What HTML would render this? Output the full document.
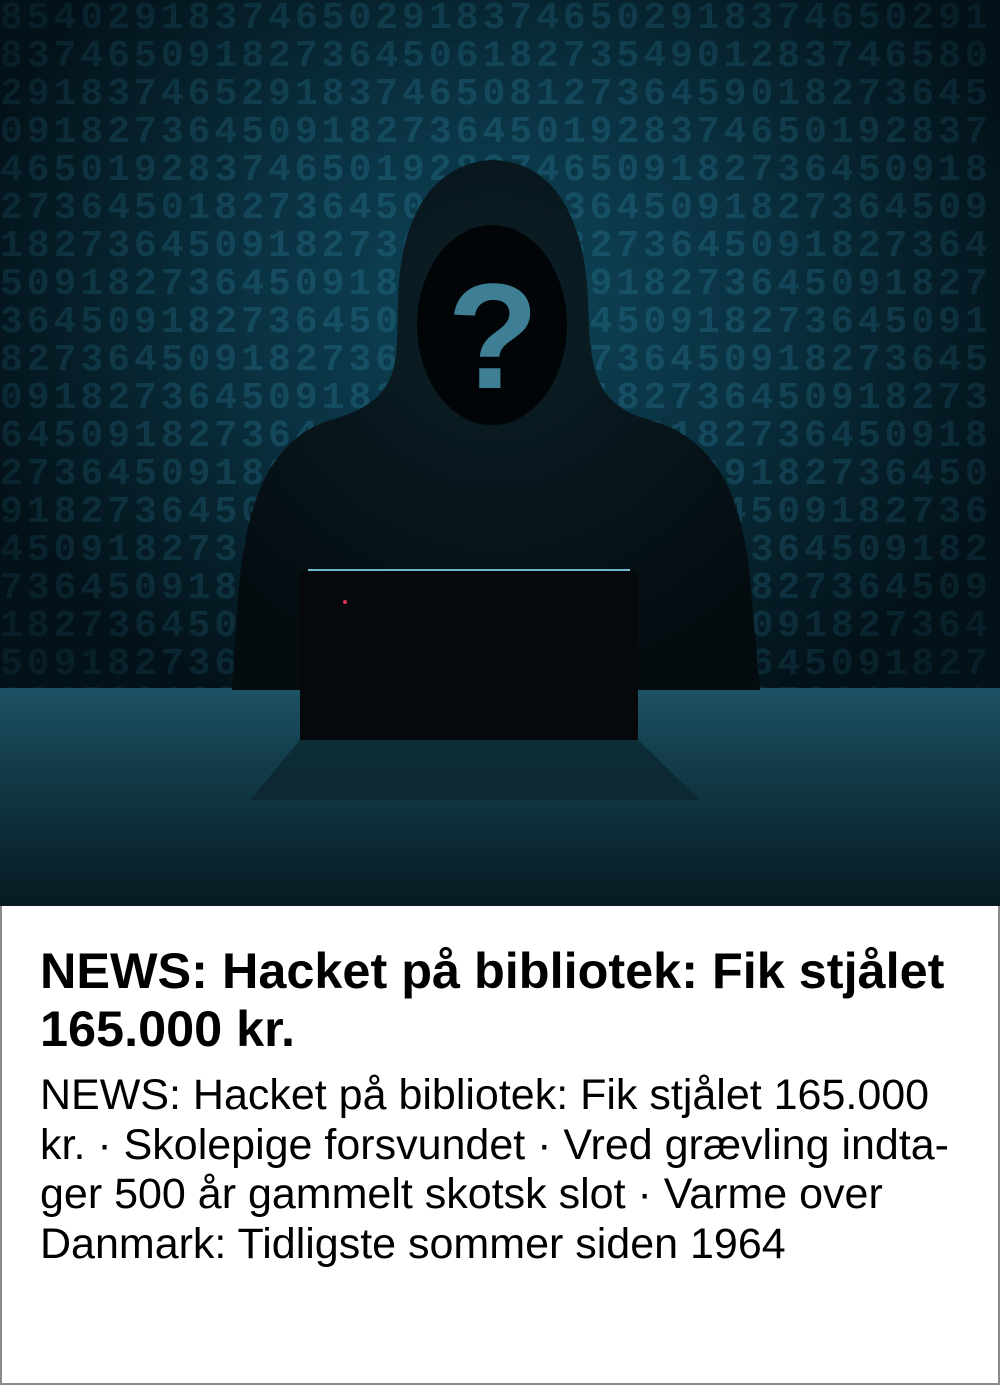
<!DOCTYPE html>
<html><head><meta charset="utf-8"><style>
*{margin:0;padding:0;box-sizing:border-box}
body{width:1000px;height:1385px;background:#fff;overflow:hidden;position:relative;font-family:"Liberation Sans",Arial,sans-serif}
.photo{position:absolute;left:0;top:0;width:1000px;height:906px;overflow:hidden;
background:radial-gradient(ellipse 560px 460px at 500px 300px,#0e4558 0%,#0a3242 45%,#061f29 75%,#031118 100%)}
.digits{position:absolute;left:0;top:0;width:1000px;height:690px;overflow:hidden;color:#2d7f9a;opacity:.32;font:bold 38px "Liberation Mono",monospace;line-height:38px;letter-spacing:4px;word-break:break-all;white-space:normal;
-webkit-mask-image:radial-gradient(ellipse 600px 500px at 500px 330px,#000 40%,rgba(0,0,0,.4) 100%)}
.desk{position:absolute;left:0;top:688px;width:1000px;height:218px;background:linear-gradient(#1d5365 0%,#143f4e 30%,#0c2a35 70%,#071a22 100%)}
.card{position:absolute;left:0;top:906px;width:1000px;height:479px;border:2px solid #8a8a8a;border-top:none}
h1{position:absolute;left:40px;top:942px;font-size:50.4px;font-weight:bold;line-height:58px;color:#000;white-space:nowrap}
p{position:absolute;left:40px;top:1071px;font-size:43px;line-height:49.5px;color:#000;white-space:nowrap}
</style></head><body>
<div class="photo">
<div class="digits">854029183746502918374650291837465029183746509182736450618273549012837465802918374652918374650812736459018273645091827364509182736450192837465019283746501928374650192837465091827364509182736450182736450918273645091827364509182736450918273645091827364509182736450918273645091827364509182736450918273645091827364509182736450918273645091827364509182736450918273645091827364509182736450918273645091827364509182736450918273645091827364509182736450918273645091827364509182736450918273645091827364509182736450918273645091827364509182736450918273645091827364509182736450918273645091827364509182736450918273645091827364509182736450918273645091827364509182736450918273645091827364509182736450918273645091827364509182736450918</div>
<div class="desk"></div>
<svg width="1000" height="906" style="position:absolute;left:0;top:0">
<defs><radialGradient id="g" cx="50%" cy="30%" r="70%"><stop offset="0" stop-color="#0c2028"/><stop offset="1" stop-color="#040c10"/></radialGradient></defs>
<path d="M490 160 C430 165 400 220 398 300 C396 360 405 400 330 420 C270 440 245 500 238 600 L232 690 L760 690 L752 600 C745 500 720 440 650 420 C590 405 590 360 588 300 C585 220 555 160 490 160 Z" fill="url(#g)"/>
<ellipse cx="492" cy="325" rx="75" ry="100" fill="#020507"/>
<text x="493" y="388" text-anchor="middle" font-family="Liberation Sans" font-weight="bold" font-size="150" fill="#3f7f95">?</text>
<path d="M305 570 L632 570 Q638 570 638 578 L638 740 L300 740 L300 578 Q300 570 305 570 Z" fill="#05090b"/>
<line x1="308" y1="570" x2="630" y2="570" stroke="#6fb9cf" stroke-width="2"/>
<circle cx="345" cy="602" r="2" fill="#e0305a"/>
<path d="M300 740 L638 740 L700 800 L250 800 Z" fill="#0a1f27" opacity=".6"/>
</svg>
</div>
<div class="card"></div>
<h1>NEWS: Hacket på bibliotek: Fik stjålet<br>165.000 kr.</h1>
<p>NEWS: Hacket på bibliotek: Fik stjålet 165.000<br>kr. · Skolepige forsvundet · Vred grævling indta-<br>ger 500 år gammelt skotsk slot · Varme over<br>Danmark: Tidligste sommer siden 1964</p>
</body></html>
